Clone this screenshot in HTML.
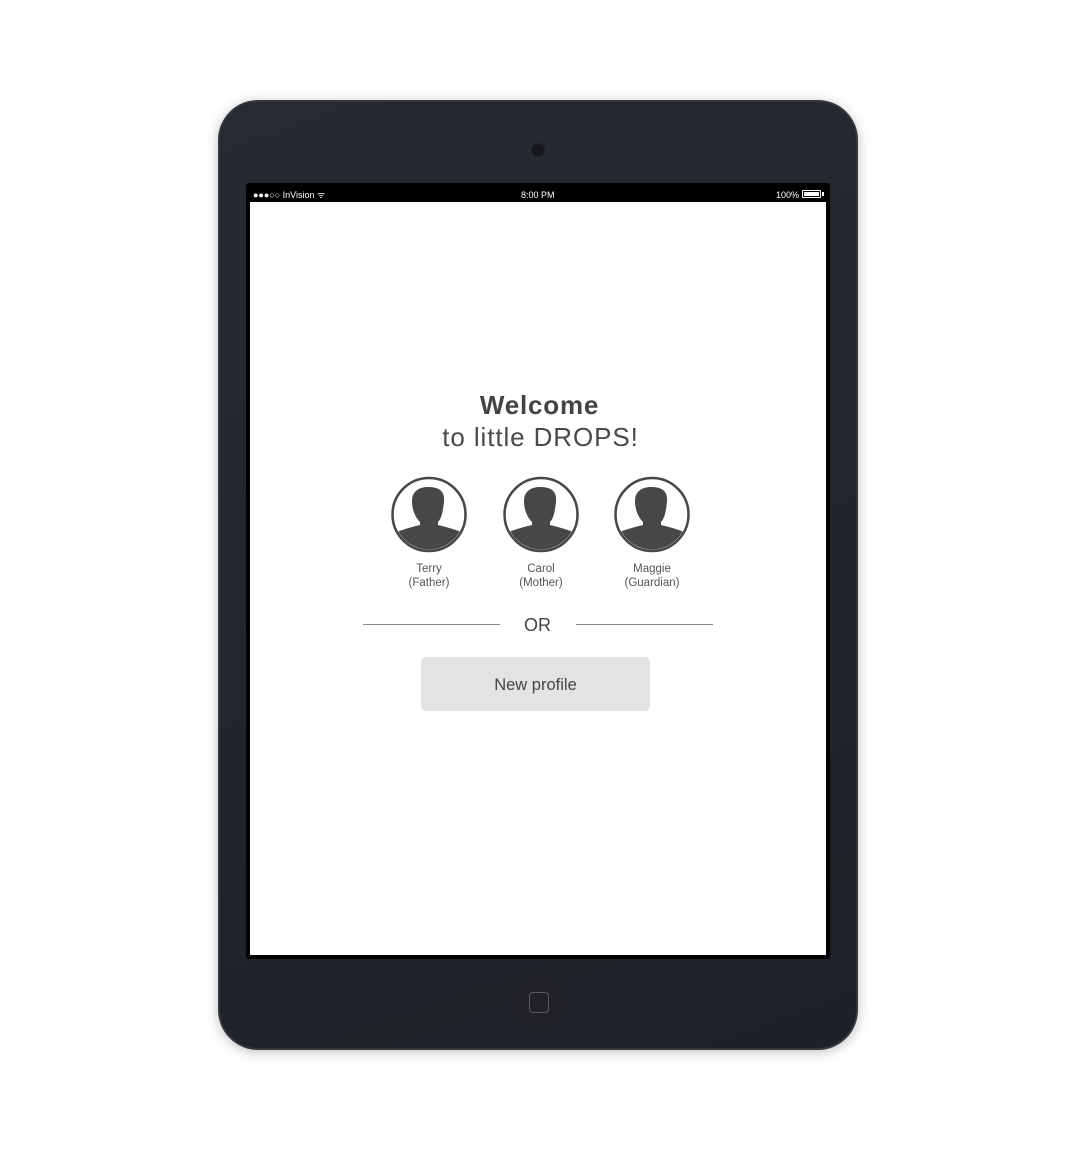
<!DOCTYPE html>
<html><head><meta charset="utf-8"><style>
*{margin:0;padding:0;box-sizing:border-box}
html,body{width:1075px;height:1150px;background:#fff;overflow:hidden;font-family:"Liberation Sans",sans-serif}
.dev{position:absolute;left:218px;top:100px;width:640px;height:950px;border-radius:40px;background:linear-gradient(160deg,#272a31,#1e2027);border:2px solid #34373e;box-shadow:0 2px 12px rgba(0,0,0,.25)}
.cam{position:absolute;left:531px;top:143px;width:14px;height:14px;border-radius:50%;background:#15161a;box-shadow:inset 0 0 2px #333}
.frame{position:absolute;left:246px;top:183px;width:584px;height:776px;background:#000;border-radius:3px}
.screen{position:absolute;left:250px;top:202px;width:576px;height:753px;background:#fff}
.sb{position:absolute;top:189px;color:#fff;font-size:9px;line-height:12px}
.home{position:absolute;left:512px;top:975px;width:54px;height:54px;border-radius:50%;background:#1f2127;box-shadow:0 0 1px #15161a}
.home i{position:absolute;left:17px;top:17px;width:20px;height:21px;border:1.5px solid #5a5c62;border-radius:4px}
.t{position:absolute;left:0;width:1075px;text-align:center;color:#444}
.name{position:absolute;width:100px;text-align:center;font-size:11.5px;line-height:14px;color:#555}
.line{position:absolute;top:624px;height:1px;background:#8a8a8a;width:137px}
.btn{position:absolute;left:421px;top:657px;width:229px;height:54px;background:#e3e3e3;border-radius:5px;text-align:center;line-height:56px;font-size:16.5px;color:#444}
svg.av{position:absolute;width:80px;height:80px}
</style></head><body>
<div class="dev"></div>
<div class="cam"></div>
<div class="frame"></div>
<div class="screen"></div>
<div class="sb" style="left:253px">●●●○○ InVision <span style="font-size:9px">ᯤ</span></div>
<div class="sb" style="left:521px">8:00 PM</div>
<div class="sb" style="left:776px">100%</div>
<div style="position:absolute;left:802px;top:190px;width:19px;height:8px;border:1px solid #fff;border-radius:1px;padding:1px"><div style="background:#fff;width:100%;height:100%"></div></div>
<div style="position:absolute;left:822px;top:192px;width:2px;height:4px;background:#fff"></div>
<div class="home"><i></i></div>

<div class="t" style="top:390px;font-size:26px;font-weight:bold;left:2px;letter-spacing:0.8px">Welcome</div>
<div class="t" style="top:422px;font-size:26px;left:3px;color:#4a4a4a;letter-spacing:0.9px">to little DROPS!</div>

<svg width="0" height="0" style="position:absolute"><defs><clipPath id="c"><circle cx="39" cy="39.5" r="35"/></clipPath></defs></svg>
<svg class="av" style="left:390px;top:475px" viewBox="0 0 80 80"><g clip-path="url(#c)"><path fill="#474747" d="M22 26C22 15 31 12 38 12C46 12 55 14 54 26C53 38 51 44 48 47L48 50C56 52 64 54 74 58L74 80L4 80L4 58C14 54 22 52 30 50L30 47C26 43 22 36 22 26Z"/></g><circle cx="39" cy="39.5" r="36.5" fill="none" stroke="#474747" stroke-width="2.5"/></svg>
<svg class="av" style="left:502px;top:475px" viewBox="0 0 80 80"><g clip-path="url(#c)"><path fill="#474747" d="M22 26C22 15 31 12 38 12C46 12 55 14 54 26C53 38 51 44 48 47L48 50C56 52 64 54 74 58L74 80L4 80L4 58C14 54 22 52 30 50L30 47C26 43 22 36 22 26Z"/></g><circle cx="39" cy="39.5" r="36.5" fill="none" stroke="#474747" stroke-width="2.5"/></svg>
<svg class="av" style="left:613px;top:475px" viewBox="0 0 80 80"><g clip-path="url(#c)"><path fill="#474747" d="M22 26C22 15 31 12 38 12C46 12 55 14 54 26C53 38 51 44 48 47L48 50C56 52 64 54 74 58L74 80L4 80L4 58C14 54 22 52 30 50L30 47C26 43 22 36 22 26Z"/></g><circle cx="39" cy="39.5" r="36.5" fill="none" stroke="#474747" stroke-width="2.5"/></svg>

<div class="name" style="left:379px;top:562px">Terry<br>(Father)</div>
<div class="name" style="left:491px;top:562px">Carol<br>(Mother)</div>
<div class="name" style="left:602px;top:562px">Maggie<br>(Guardian)</div>

<div class="line" style="left:363px"></div>
<div class="line" style="left:576px"></div>
<div class="t" style="top:615px;font-size:18px;color:#444">OR</div>
<div class="btn">New profile</div>
</body></html>
